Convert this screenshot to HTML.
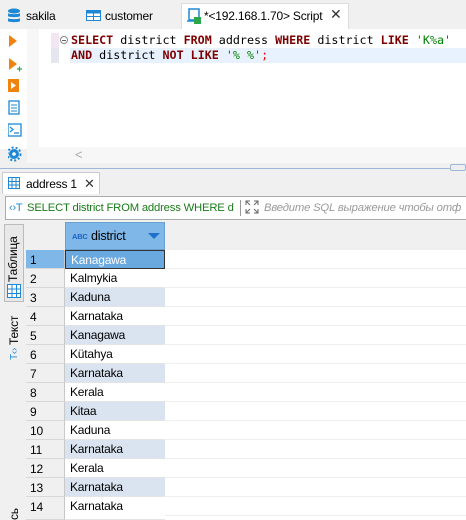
<!DOCTYPE html>
<html style="width:466px;height:520px;overflow:hidden"><head><meta charset="utf-8"><style>
*{box-sizing:border-box;margin:0;padding:0}
body{width:466px;height:520px;overflow:hidden;background:#f0f0f0;font-family:"Liberation Sans","DejaVu Sans",sans-serif;font-size:12px;color:#000;position:relative;letter-spacing:-0.2px}
.a{position:absolute}
.mono{font-family:"DejaVu Sans Mono","Liberation Mono",monospace;font-size:11.7px;white-space:pre;letter-spacing:0}
.kw{color:#7f0000;font-weight:bold}
.st{color:#008000}
.row{position:absolute;left:26px;height:19px;width:440px}
.row .n{position:absolute;left:0;width:39px;height:19px;background:#f0f0f0;border-bottom:1px solid #d8d8d8;border-right:1px solid #c8c8c8;padding:3px 0 0 4px;font-size:12px}
.row .v{position:absolute;left:39px;width:100px;height:19px;border-bottom:1px solid #e4e4e4;padding:2px 0 0 5px;font-size:12px}
.row .r{position:absolute;left:139px;right:0;height:19px;border-bottom:1px solid #eee;background:#fff}
.alt{background:#dae4f0}
</style></head><body>
<div class="a" style="left:0;top:0;width:466px;height:29px;background:#f0f0f0"></div>
<svg class="a" style="left:7px;top:8px" width="14" height="16"><ellipse cx="7" cy="3" rx="6" ry="2.5" fill="#1e88d6"/><path d="M1 5v3c0 1.5 12 1.5 12 0V5c0 1.5-12 1.5-12 0zM1 10v3c0 1.5 12 1.5 12 0v-3c0 1.5-12 1.5-12 0z" fill="#1e88d6"/></svg>
<div class="a" style="left:26px;top:9px;font-size:12px">sakila</div>
<svg class="a" style="left:86px;top:10px" width="15" height="11"><rect x="0.5" y="0.5" width="14" height="10" fill="#fff" stroke="#1e88d6"/><rect x="0.5" y="0.5" width="14" height="3" fill="#1e88d6"/><path d="M0 6.5h15M7.5 3v8" stroke="#1e88d6"/></svg>
<div class="a" style="left:105px;top:9px;font-size:12px">customer</div>
<div class="a" style="left:181px;top:3px;width:168px;height:26px;background:#fff;border:1px solid #ddd;border-bottom:none"></div>
<svg class="a" style="left:187px;top:8px" width="14" height="16"><path d="M2 1h10v11H2z" fill="none" stroke="#1e88d6" stroke-width="1.5"/><path d="M0 13h9" stroke="#1e88d6" stroke-width="1.5"/><rect x="7" y="9" width="7" height="7" fill="#2aa84a"/></svg>
<div class="a" style="left:204px;top:9px;font-size:12px">*&lt;192.168.1.70&gt; Script</div>
<div class="a" style="left:330px;top:6px;font-size:14px;color:#333">✕</div>
<div class="a" style="left:0;top:29px;width:466px;height:120px;background:#fff"></div>
<div class="a" style="left:27px;top:29px;width:12px;height:134px;background:#f7f7f7"></div>
<div class="a" style="left:39px;top:29px;width:30px;height:118px;background:#fff"></div>
<div class="a" style="left:51px;top:33px;width:8px;height:15px;background:#f2e6f2"></div>
<div class="a" style="left:51px;top:48px;width:8px;height:15px;background:#e6e6f0"></div>
<div class="a" style="left:70px;top:48px;width:396px;height:15px;background:#e8f2fe"></div>
<div class="a" style="left:60px;top:36px;width:8px;height:8px;border:1px solid #888;border-radius:50%"></div>
<div class="a" style="left:62px;top:39.5px;width:4px;height:1px;background:#666"></div>
<div class="a mono" style="left:71px;top:33px"><span class="kw">SELECT</span> district <span class="kw">FROM</span> address <span class="kw">WHERE</span> district <span class="kw">LIKE</span> <span class="st">'K%a'</span></div>
<div class="a mono" style="left:71px;top:48px"><span class="kw">AND</span> district <span class="kw">NOT</span> <span class="kw">LIKE</span> <span class="st">'% %'</span><span style="color:#e00">;</span></div>
<div class="a" style="left:27px;top:147px;width:439px;height:16px;background:#f7f7f7"></div>
<div class="a" style="left:75px;top:147px;color:#aaa;font-size:13px">&lt;</div>
<svg class="a" style="left:8px;top:34px" width="14" height="140">
<path d="M1 1l8 6-8 6z" fill="#f0820f"/>
<path d="M1 24l8 6-8 6z" fill="#f0820f"/><path d="M9 35h5M11.5 32.5v5" stroke="#2aa84a" stroke-width="1.2"/>
<rect x="0" y="45" width="11" height="13" fill="#f0820f"/><path d="M3 48l5 3.5-5 3.5z" fill="#fff"/>
<rect x="1" y="67" width="10" height="13" fill="none" stroke="#1e88d6" stroke-width="1.3"/><path d="M3 71h6M3 74h6M3 77h6" stroke="#1e88d6"/>
<rect x="0" y="90" width="13" height="12" fill="#fff" stroke="#1e88d6" stroke-width="1.3"/><path d="M2 93l3 2.5-3 2.5M6 99h5" stroke="#1e88d6" stroke-width="1.2" fill="none"/>
<circle cx="6" cy="120" r="5" fill="#1e88d6"/><circle cx="6" cy="120" r="6.5" fill="none" stroke="#1e88d6" stroke-width="2" stroke-dasharray="2 2"/><circle cx="6" cy="120" r="1.8" fill="#fff"/>
</svg>
<div class="a" style="left:0;top:168px;width:450px;height:1px;background:#9db8d8"></div>
<div class="a" style="left:450px;top:164px;width:16px;height:7px;border:1px solid #9db8d8;border-radius:2px;background:#eee"></div>
<div class="a" style="left:2px;top:172px;width:98px;height:22px;background:#fff;border:1px solid #ccc;border-bottom:none"></div>
<svg class="a" style="left:8px;top:177px" width="12" height="12"><rect x="0.5" y="0.5" width="11" height="11" fill="#fff" stroke="#1e88d6"/><path d="M0 4.5h12M0 8h12M4 0v12M8 0v12" stroke="#1e88d6"/></svg>
<div class="a" style="left:26px;top:177px;font-size:12px">address 1</div>
<div class="a" style="left:84px;top:176px;font-size:13px;color:#333">✕</div>
<div class="a" style="left:5px;top:196px;width:461px;height:24px;background:#fff;border:1px solid #aaa;border-right:none"></div>
<div class="a" style="left:9px;top:202px;font-size:11px;color:#1e88d6">‹›T</div>
<div class="a" style="left:27px;top:202px;font-size:11.3px;color:#1a7a1a;white-space:nowrap">SELECT district FROM address WHERE d</div>
<div class="a" style="left:240px;top:200px;width:1px;height:16px;background:#999"></div>
<svg class="a" style="left:245px;top:200px" width="14" height="14"><path d="M1 5V1h4M9 1h4v4M13 9v4H9M5 13H1V9M1 1l4 4M13 1l-4 4M13 13l-4-4M1 13l4-4" stroke="#666" fill="none"/></svg>
<div class="a" style="left:264px;top:202px;font-size:11.3px;color:#999;font-style:italic;white-space:nowrap">Введите SQL выражение чтобы отф</div>
<div class="a" style="left:4px;top:224px;width:20px;height:78px;background:#e8e8e8;border:1px solid #bbb"></div>
<div class="a" style="left:6px;top:282px;font-size:12px;transform:rotate(-90deg);transform-origin:0 0;white-space:nowrap">Таблица</div>
<svg class="a" style="left:7px;top:284px" width="14" height="14"><rect x="0.5" y="0.5" width="13" height="13" fill="#fff" stroke="#1e88d6"/><path d="M0 5h14M0 9.5h14M5 0v14M9.5 0v14" stroke="#1e88d6"/></svg>
<div class="a" style="left:7px;top:345px;font-size:12px;transform:rotate(-90deg);transform-origin:0 0;white-space:nowrap">Текст</div>
<div class="a" style="left:9px;top:360px;font-size:10px;color:#1e88d6;transform:rotate(-90deg);transform-origin:0 0">T‹›</div>
<div class="a" style="left:7px;top:520px;font-size:12px;transform:rotate(-90deg);transform-origin:0 0">сь</div>
<div class="a" style="left:26px;top:222px;width:440px;height:298px;background:#fff"></div>
<div class="a" style="left:26px;top:222px;width:39px;height:28px;background:#f0f0f0"></div>
<div class="a" style="left:165px;top:222px;width:301px;height:28px;background:#f0f0f0"></div>
<div class="a" style="left:65px;top:222px;width:100px;height:28px;background:#7fb8e8;border:1px solid #6aa0d0"></div>
<div class="a" style="left:72px;top:232px;font-size:7.5px;font-weight:bold;color:#1e60c0">ABC</div>
<div class="a" style="left:91px;top:229px;font-size:12.5px">district</div>
<div class="a" style="left:148px;top:233px;width:0;height:0;border-left:6px solid transparent;border-right:6px solid transparent;border-top:6px solid #1e70c8"></div>
<div class="row" style="top:250px"><div class="n" style="background:#7fb8e8">1</div><div class="v" style="background:#6aa8e0;color:#fff;border:1px solid #333">Kanagawa</div><div class="r"></div></div>
<div class="row" style="top:269px"><div class="n">2</div><div class="v">Kalmykia</div><div class="r"></div></div>
<div class="row" style="top:288px"><div class="n">3</div><div class="v alt">Kaduna</div><div class="r"></div></div>
<div class="row" style="top:307px"><div class="n">4</div><div class="v">Karnataka</div><div class="r"></div></div>
<div class="row" style="top:326px"><div class="n">5</div><div class="v alt">Kanagawa</div><div class="r"></div></div>
<div class="row" style="top:345px"><div class="n">6</div><div class="v">Kütahya</div><div class="r"></div></div>
<div class="row" style="top:364px"><div class="n">7</div><div class="v alt">Karnataka</div><div class="r"></div></div>
<div class="row" style="top:383px"><div class="n">8</div><div class="v">Kerala</div><div class="r"></div></div>
<div class="row" style="top:402px"><div class="n">9</div><div class="v alt">Kitaa</div><div class="r"></div></div>
<div class="row" style="top:421px"><div class="n">10</div><div class="v">Kaduna</div><div class="r"></div></div>
<div class="row" style="top:440px"><div class="n">11</div><div class="v alt">Karnataka</div><div class="r"></div></div>
<div class="row" style="top:459px"><div class="n">12</div><div class="v">Kerala</div><div class="r"></div></div>
<div class="row" style="top:478px"><div class="n">13</div><div class="v alt">Karnataka</div><div class="r"></div></div>
<div class="row" style="top:497px;height:23px"><div class="n" style="height:23px">14</div><div class="v" style="height:23px">Karnataka</div><div class="r"></div></div>
</body></html>
